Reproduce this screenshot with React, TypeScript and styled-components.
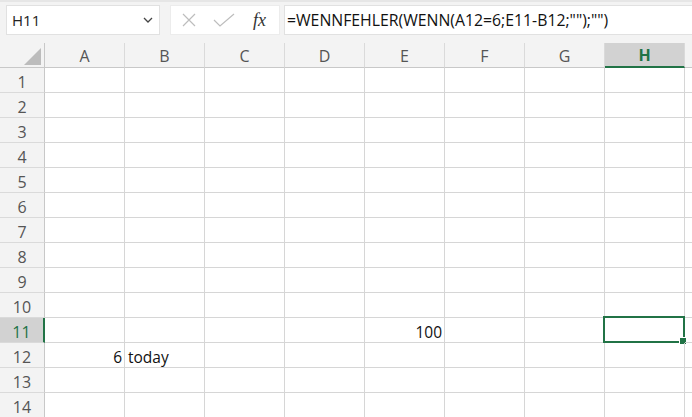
import React from "react";
import styled, { createGlobalStyle } from "styled-components";

const Global = createGlobalStyle`
  html, body { margin: 0; padding: 0; background: #fff; }
  body { font-family: "Open Sans", "Noto Sans", sans-serif; }
`;

const GREEN = "#217346";
const COLS = ["A", "B", "C", "D", "E", "F", "G", "H", "I"];
const ROWS = Array.from({ length: 14 }, (_, i) => i + 1);

const Page = styled.div`
  width: 692px;
  height: 417px;
  overflow: hidden;
  background: #fff;
`;

const Toolbar = styled.div`
  height: 43px;
  box-sizing: border-box;
  background: #f3f3f3;
  border-top: 2px solid #e6e6e6;
  padding: 3px 0 0 6px;
  display: flex;
  align-items: flex-start;
`;

const NameBox = styled.div`
  width: 154px;
  height: 30px;
  box-sizing: border-box;
  background: #fff;
  border: 1px solid #e1e1e1;
  display: flex;
  align-items: center;
  justify-content: space-between;
  padding: 0 6px 0 5px;
  font-size: 15px;
  color: #222;
`;

const IconBox = styled.div`
  width: 110px;
  height: 30px;
  margin-left: 10px;
  box-sizing: border-box;
  background: #fff;
  border: 1px solid #ececec;
  display: flex;
  align-items: center;
  padding-left: 10px;
  gap: 16px;
`;

const Fx = styled.span`
  font-family: "Liberation Serif", serif;
  font-style: italic;
  font-size: 18px;
  color: #333;
  margin-left: 2px;
`;

const FormulaInput = styled.div`
  flex: 1;
  height: 30px;
  margin-left: 4px;
  box-sizing: border-box;
  background: #fff;
  border: 1px solid #e1e1e1;
  border-right: none;
  display: flex;
  align-items: center;
  padding-left: 2px;
  font-size: 15.8px;
  color: #111;
  white-space: nowrap;
`;

const Grid = styled.div`
  display: grid;
  grid-template-columns: 45px repeat(9, 80px);
  grid-auto-rows: 25px;
`;

const Corner = styled.div`
  background: #f3f3f3;
  border-right: 1px solid #c8c8c8;
  border-bottom: 1px solid #c8c8c8;
  box-sizing: border-box;
  display: flex;
  align-items: flex-end;
  justify-content: flex-end;
  padding: 0 3px 2px 0;
`;

const ColHead = styled.div<{ $active?: boolean }>`
  box-sizing: border-box;
  background: ${(p) => (p.$active ? "#d2d2d2" : "#f3f3f3")};
  border-right: 1px solid #dadada;
  border-bottom: ${(p) => (p.$active ? `2px solid ${GREEN}` : "1px solid #c8c8c8")};
  display: flex;
  align-items: center;
  justify-content: center;
  padding-top: 1px;
  font-size: 16px;
  font-weight: ${(p) => (p.$active ? 700 : 400)};
  color: ${(p) => (p.$active ? GREEN : "#555")};
`;

const RowHead = styled.div<{ $active?: boolean }>`
  box-sizing: border-box;
  background: ${(p) => (p.$active ? "#d2d2d2" : "#f3f3f3")};
  border-bottom: 1px solid #dadada;
  border-right: ${(p) => (p.$active ? `2px solid ${GREEN}` : "1px solid #c8c8c8")};
  display: flex;
  align-items: center;
  justify-content: center;
  padding-top: 3px;
  font-size: 16px;
  color: ${(p) => (p.$active ? GREEN : "#555")};
`;

const Cell = styled.div<{ $align?: "left" | "right" }>`
  position: relative;
  box-sizing: border-box;
  border-right: 1px solid #d6d6d6;
  border-bottom: 1px solid #d6d6d6;
  display: flex;
  align-items: center;
  justify-content: ${(p) => (p.$align === "right" ? "flex-end" : "flex-start")};
  padding: 3px 2px 0 3px;
  font-family: "Open Sans", "Noto Sans", sans-serif;
  font-size: 15.5px;
  color: #111;
  white-space: nowrap;
`;

const Selection = styled.div`
  position: absolute;
  left: -2px;
  top: -2px;
  right: -1px;
  bottom: -1px;
  border: 2px solid ${GREEN};
  pointer-events: none;
`;

const Handle = styled.div`
  position: absolute;
  right: -4px;
  bottom: -4px;
  width: 6px;
  height: 6px;
  background: ${GREEN};
  border: 1px solid #fff;
`;

const cellData: Record<string, { text: string; align: "left" | "right" }> = {
  E11: { text: "100", align: "right" },
  A12: { text: "6", align: "right" },
  B12: { text: "today", align: "left" },
};

export default function App() {
  return (
    <Page>
      <Global />
      <Toolbar>
        <NameBox>
          <span>H11</span>
          <svg width="10" height="6" viewBox="0 0 10 6">
            <path d="M1 1l4 4 4-4" fill="none" stroke="#444" strokeWidth="1.3" />
          </svg>
        </NameBox>
        <IconBox>
          <svg width="16" height="16" viewBox="0 0 16 16">
            <path d="M2 2l12 12M14 2L2 14" stroke="#bdbdbd" strokeWidth="1.2" />
          </svg>
          <svg width="22" height="16" viewBox="0 0 22 16">
            <path d="M1 8l6 6L21 2" fill="none" stroke="#bdbdbd" strokeWidth="1.2" />
          </svg>
          <Fx>fx</Fx>
        </IconBox>
        <FormulaInput>=WENNFEHLER(WENN(A12=6;E11-B12;"");"")</FormulaInput>
      </Toolbar>
      <Grid>
        <Corner>
          <svg width="17" height="17" viewBox="0 0 17 17">
            <path d="M17 0V17H0Z" fill="#bcbcbc" />
          </svg>
        </Corner>
        {COLS.map((c) => (
          <ColHead key={c} $active={c === "H"}>
            {c === "I" ? "" : c}
          </ColHead>
        ))}
        {ROWS.map((r) => (
          <React.Fragment key={r}>
            <RowHead $active={r === 11}>{r}</RowHead>
            {COLS.map((c) => {
              const d = cellData[`${c}${r}`];
              return (
                <Cell key={c} $align={d?.align}>
                  {d?.text}
                  {c === "H" && r === 11 && (
                    <Selection>
                      <Handle />
                    </Selection>
                  )}
                </Cell>
              );
            })}
          </React.Fragment>
        ))}
      </Grid>
    </Page>
  );
}
